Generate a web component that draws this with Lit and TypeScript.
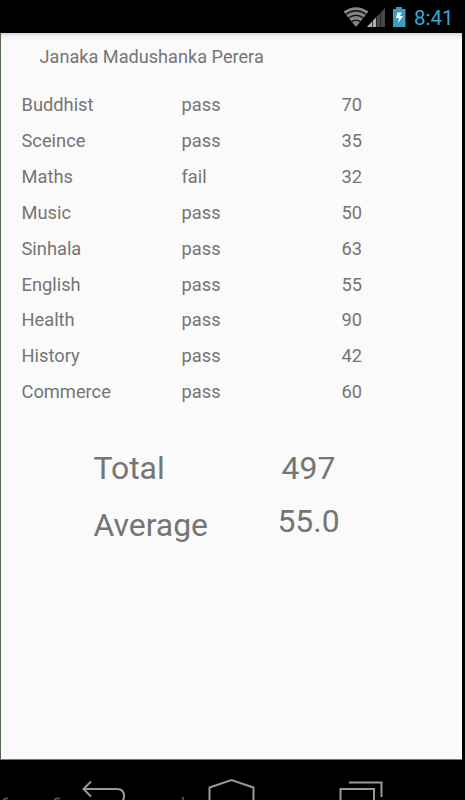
import { LitElement, html, css } from "lit";
import { customElement } from "lit/decorators.js";

const RESULTS: [string, string, number][] = [
  ["Buddhist", "pass", 70],
  ["Sceince", "pass", 35],
  ["Maths", "fail", 32],
  ["Music", "pass", 50],
  ["Sinhala", "pass", 63],
  ["English", "pass", 55],
  ["Health", "pass", 90],
  ["History", "pass", 42],
  ["Commerce", "pass", 60],
];

@customElement("status-bar")
class StatusBar extends LitElement {
  static styles = css`
    :host { display: flex; height: 33px; background: #000; align-items: center; padding-left: 343px; box-sizing: border-box; }
    svg { display: block; flex: none; }
    .time { color: #35a9d6; font-size: 20.5px; line-height: 24px; margin: 3px 0 0 7px; }
  `;
  render() {
    return html`
      <svg width="64" height="33" viewBox="343 0 64 33">
        <path d="M343.500 11.500Q356 3 368.500 11.500L356 27Z" fill="#858585" />
        <g fill="none" stroke="#111" stroke-width="1.300">
          <path d="M345.500 14.500Q356 7 366.500 14.500" />
          <path d="M348.500 18Q356 12.500 363.500 18" />
          <path d="M351.500 21.800Q356 18.300 360.500 21.800" />
        </g>
        <path d="M385 8V27H367Z" fill="#484848" />
        <path d="M376 17.500V27H367Z" fill="#b0b0b0" />
        <path d="M372.500 20V27M376.500 16V27M380.500 12V27" stroke="#1c1c1c" stroke-width=".8" />
        <path d="M396 7H402V9H405.500V27H393V9H396Z" fill="#3e9cbf" />
        <path d="M397.500 12.500H401.500L400 16H403L398 23L399 18H396Z" fill="#fff" />
      </svg>
      <span class="time">8:41</span>
    `;
  }
}

@customElement("nav-bar")
class NavBar extends LitElement {
  static styles = css`
    :host { display: block; height: 40px; background: #000; overflow: hidden; }
    svg { display: block; }
  `;
  render() {
    return html`
      <svg width="465" height="40" viewBox="0 760 465 40" fill="none" stroke="#999" stroke-width="2">
        <path d="M91 781.500L83.500 789L91 796.500M83.500 789H117Q124 789 124 796T117 804" />
        <path d="M209.500 804V787.500L231.500 780L253.500 787.500V804" />
        <path d="M340.500 804V789H374V804M349 782.500H381.500V797" />
        <path d="M3 801Q4 798 8 798.500M54 801Q55 798 60 798.500M183 797V801" stroke="#555" stroke-width="1.800" />
      </svg>
    `;
  }
}

@customElement("app-root")
class AppRoot extends LitElement {
  static styles = css`
    :host { display: block; width: 465px; height: 800px; overflow: hidden; background: #000; font-family: Roboto, sans-serif; color: #757575; }
    .screen { box-sizing: border-box; width: 462px; height: 727px; background: linear-gradient(#d4d4d4, #efefef 3px, #fafafa 7px); border-left: 1px solid #51684c; border-bottom: 1px solid #777; }
    .name { padding: 12px 0 0 38.500px; font-size: 18.150px; line-height: 24px; }
    .table { display: grid; grid-template-columns: 160px 160px 1fr; grid-auto-rows: 35.900px; padding: 18.100px 0 0 20.500px; font-size: 18.300px; line-height: 36px; }
    .totals { display: grid; grid-template-columns: 161px 108px; padding: 29.500px 0 0 92.500px; font-size: 31.900px; line-height: 56px; }
    .value { text-align: center; }
    .totals .lower { line-height: 58px; }
    .totals .average { line-height: 50px; }
  `;
  render() {
    return html`
      <status-bar></status-bar>
      <main class="screen">
        <div class="name">Janaka Madushanka Perera</div>
        <div class="table">
          ${RESULTS.map(([s, r, m]) => html`<span>${s}</span><span>${r}</span><span>${m}</span>`)}
        </div>
        <div class="totals">
          <span>Total</span><span class="value">497</span>
          <span class="lower">Average</span><span class="value average">55.0</span>
        </div>
      </main>
      <nav-bar></nav-bar>
    `;
  }
}
